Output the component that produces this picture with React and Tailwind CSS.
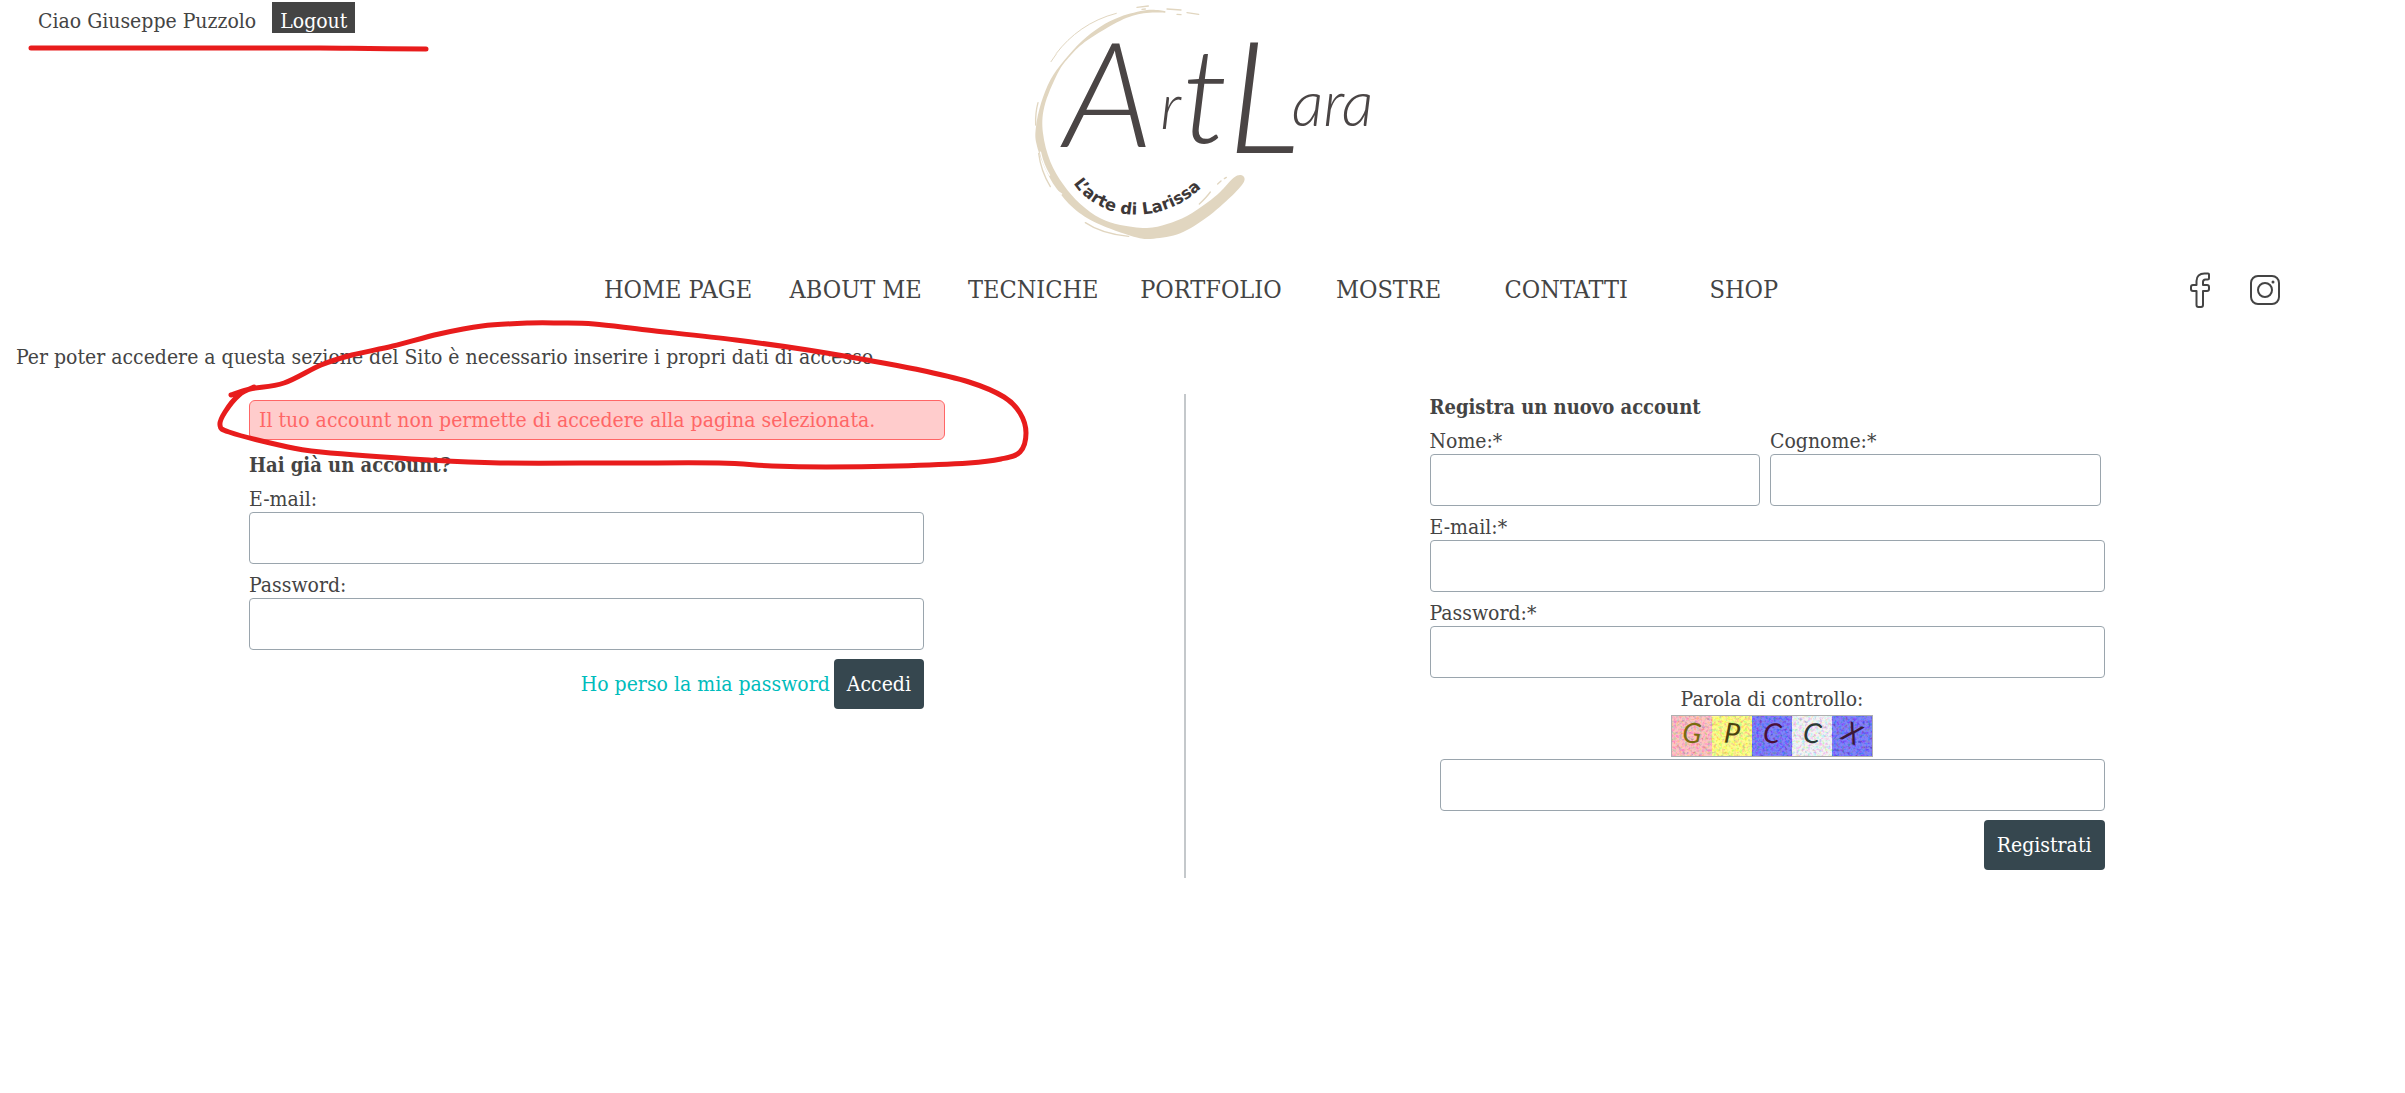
import React from "react";

const NAV = ["HOME PAGE", "ABOUT ME", "TECNICHE", "PORTFOLIO", "MOSTRE", "CONTATTI", "SHOP"];

const LOOP = [
  [231, 395], [250, 389], [284, 383], [321, 365], [352, 355], [393, 346], [439, 334], [482, 326],
  [529, 323], [560, 323], [594, 324], [647, 330], [736, 340], [808, 350], [861, 359], [915, 369],
  [969, 382], [1004, 397], [1020, 413], [1026, 433], [1020, 452], [1001, 459], [969, 463],
  [897, 466], [826, 467], [772, 466], [719, 463], [620, 463], [500, 463], [429, 460], [321, 452],
  [279, 445], [229, 432], [220, 425], [225, 412], [239, 395], [254, 387],
];

const RING = [
  [435, 33], [380, 30], [300, 50], [240, 80], [185, 123], [130, 183], [90, 240], [62, 310],
  [47, 380], [48, 430], [72, 500], [108, 565], [160, 625], [230, 670], [340, 710], [400, 716],
  [480, 700], [560, 652], [630, 592], [671, 545], [664, 526], [640, 533], [600, 575], [560, 608],
  [500, 648], [440, 672], [380, 684], [300, 675], [240, 655], [180, 612], [130, 555], [90, 485],
  [68, 400], [72, 320], [112, 220], [150, 167], [202, 120], [300, 62], [370, 40], [435, 38],
];

// Catmull-Rom spline through the points, written as cubic segments.
function smooth(points) {
  let d = `M${points[0][0]} ${points[0][1]}`;
  for (let i = 0; i < points.length - 1; i++) {
    const p0 = points[i - 1] || points[i];
    const p1 = points[i];
    const p2 = points[i + 1];
    const p3 = points[i + 2] || p2;
    d += ` C${p1[0] + (p2[0] - p0[0]) / 6} ${p1[1] + (p2[1] - p0[1]) / 6} ${p2[0] - (p3[0] - p1[0]) / 6} ${p2[1] - (p3[1] - p1[1]) / 6} ${p2[0]} ${p2[1]}`;
  }
  return d;
}

function Marker() {
  return (
    <svg aria-hidden="true" className="pointer-events-none absolute top-0 left-0 z-10" width="1100" height="500" fill="none" stroke="#e81c1c" strokeWidth="5" strokeLinecap="round" strokeLinejoin="round">
      <path d="M31 48 H320 C350 48 360 49 426 49" />
      <path d={smooth(LOOP)} />
    </svg>
  );
}

function Logo() {
  return (
    <svg role="img" aria-label="Art Lara, L'arte di Larissa" viewBox="-7 0 1110 750" className="h-[250px] w-[370px]">
      <path fill="#e1d6c0" d={smooth(RING)} />
      <g fill="none" stroke="#e1d6c0" strokeLinecap="round">
        <path strokeWidth="3" d="M108 160 C150 105 210 60 288 40" />
        <path strokeWidth="3" d="M92 185 L108 162" />
        <path strokeWidth="4" d="M350 22 L384 18 M365 28 L375 27 M440 27 L482 30 M470 43 L482 44 M500 38 L535 43" />
        <path strokeWidth="4" d="M195 668 C230 692 270 704 325 709" />
        <path strokeWidth="4" d="M537 612 C550 600 560 590 570 576 M592 552 L602 543 M612 536 L618 532" />
        <path strokeWidth="4" d="M53 308 C47 330 45 350 46 375 M55 460 C60 500 72 530 90 560" />
      </g>
      <path fill="none" stroke="#fff" strokeWidth="4" d="M60 455 C66 485 75 505 88 527 M85 540 C95 560 110 573 125 583" />
      <g fill="#4a4545" fontFamily="Lato, sans-serif" fontWeight="300" fontStyle="italic">
        <text x="130" y="440" fontSize="440">A</text>
        <text x="420" y="388" fontSize="190">r</text>
        <text x="486" y="430" fontSize="400">t</text>
        <text x="620" y="460" fontSize="470">L</text>
        <text x="814" y="378" fontSize="190">ara</text>
      </g>
      <path id="motto" fill="none" d="M158 548 C240 668 440 690 575 530" />
      <text fill="#3d3838" fontFamily="'DejaVu Sans', sans-serif" fontWeight="700" fontSize="49">
        <textPath href="#motto" startOffset="2">L’arte di Larissa</textPath>
      </text>
    </svg>
  );
}

function Facebook() {
  return (
    <svg viewBox="0 0 20 36" className="h-9 w-5" fill="none" stroke="#444" strokeWidth="2" strokeLinejoin="round">
      <path d="M18 1.500 H14.500 C9.500 1.500 6.500 4.500 6.500 9 V13 H3 C1.800 13 1 13.800 1 15 V17 C1 18.200 1.800 19 3 19 H6.500 V33 C6.500 34.200 7.300 35 8.500 35 H11 C12.200 35 13 34.200 13 33 V19 H17 C18.200 19 19 18.200 19 17 V15 C19 13.800 18.200 13 17 13 H13 V10 C13 8.500 13.800 7.500 15.500 7.500 H17.500 C18.500 7.500 19 7 19 6 V2.500 C19 2 18.700 1.500 18 1.500 Z" />
    </svg>
  );
}

function Instagram() {
  return (
    <svg viewBox="0 0 30 30" className="size-[30px]" fill="none" stroke="#444" strokeWidth="2">
      <rect x="1" y="1" width="28" height="28" rx="7" />
      <circle cx="15" cy="15" r="7" />
      <circle cx="23" cy="7" r="1.500" fill="#444" stroke="none" />
    </svg>
  );
}

const TILES = [
  { c: "G", bg: "#ffb0b0", ink: "#7a6a10", a: 4 },
  { c: "P", bg: "#fffc66", ink: "#4a4210", a: 4 },
  { c: "C", bg: "#5a5af8", ink: "#4a1038", a: 10 },
  { c: "C", bg: "#f0f0f0", ink: "#2c3a36", a: 10 },
  { c: "X", bg: "#5a5af8", ink: "#3c1838", a: 24 },
];

function Captcha() {
  return (
    <svg role="img" aria-label="Parola di controllo" viewBox="0 0 202 42" className="h-[42px] w-[202px] overflow-visible">
      <filter id="grain" x="0" y="0" width="100%" height="100%" colorInterpolationFilters="sRGB">
        <feTurbulence type="fractalNoise" baseFrequency="0.35" numOctaves="2" seed="4" />
        <feColorMatrix values="3 0 0 0 -0.6  0 3 0 0 -0.6  0 0 3 0 -0.500  0 0 0 0 0.250" />
      </filter>
      {TILES.map((t, i) => (
        <rect key={i} x={1 + i * 40} y="1" width="40" height="40" fill={t.bg} />
      ))}
      <rect x="1" y="1" width="200" height="40" filter="url(#grain)" />
      {TILES.map((t, i) => (
        <text key={i} x={21 + i * 40} y="28" textAnchor="middle" fontSize="28" fontStyle="italic" fontFamily="Lato, sans-serif" fill={t.ink} transform={`rotate(${t.a} ${21 + i * 40} 19)`}>
          {t.c}
        </text>
      ))}
      <rect x="0.500" y="0.500" width="201" height="41" fill="none" stroke="#b0b0b0" />
    </svg>
  );
}

const INPUT = "block h-[52px] w-full rounded border border-[#9aa5ad] bg-white px-3 outline-none";
const BUTTON = "h-[50px] cursor-pointer rounded bg-[#36474f] px-[13px] text-white";

function Field({ id, label, type = "text" }) {
  return (
    <div className="mt-2">
      <label htmlFor={id} className="block">{label}</label>
      <input id={id} name={id} type={type} className={INPUT} />
    </div>
  );
}

export default function App() {
  return (
    <div className="relative min-h-screen bg-white font-['DejaVu_Serif_Condensed','DejaVu_Serif',serif] text-[21px] leading-[26px] text-[#444]">
      <header>
        <div className="grid grid-cols-[1fr_auto_1fr]">
          <div className="flex items-start gap-4 pt-[2px] pl-[38px]">
            <span className="whitespace-nowrap pt-[6px]">Ciao Giuseppe Puzzolo</span>
            <button type="button" className="h-[31px] cursor-pointer bg-[#444] px-2 pt-[6px] text-white">Logout</button>
          </div>
          <Logo />
        </div>
        <div className="grid grid-cols-[24.5%_1fr_23.8%] items-center pt-[22px]">
          <nav className="col-start-2 grid grid-cols-7 text-center text-[25px] leading-9">
            {NAV.map((n) => (
              <a key={n} href="#" className="whitespace-nowrap">{n}</a>
            ))}
          </nav>
          <div className="flex items-center justify-end gap-10 pr-[125px]">
            <a href="#" aria-label="Facebook"><Facebook /></a>
            <a href="#" aria-label="Instagram"><Instagram /></a>
          </div>
        </div>
      </header>
      <main className="pt-9">
        <p className="pl-4">Per poter accedere a questa sezione del Sito è necessario inserire i propri dati di accesso.</p>
        <div className="mt-6 grid min-h-[484px] grid-cols-[49.3%_1fr]">
          <section className="border-r-2 border-[#c4c8cb] pt-[6px] pl-[21%]">
            <div role="alert" className="mb-3 flex min-h-10 max-w-[696px] items-center rounded-md border border-[#ff6666] bg-[#ffcccc] px-[9px] text-[#ff6666]">
              Il tuo account non permette di accedere alla pagina selezionata.
            </div>
            <form className="max-w-[675px]">
              <h2 className="text-xl leading-[26px] font-bold">Hai già un account?</h2>
              <Field id="login-email" label="E-mail:" type="email" />
              <Field id="login-password" label="Password:" type="password" />
              <div className="mt-[9px] flex items-center justify-end gap-1">
                <a href="#" className="text-[#00bcbc]">Ho perso la mia password</a>
                <button type="button" className={BUTTON}>Accedi</button>
              </div>
            </form>
          </section>
          <section className="pl-[20%]">
            <form className="max-w-[675px]">
              <h2 className="text-xl leading-[26px] font-bold">Registra un nuovo account</h2>
              <div className="grid grid-cols-2 gap-[10px] pr-1">
                <Field id="nome" label="Nome:*" />
                <Field id="cognome" label="Cognome:*" />
              </div>
              <Field id="email" label="E-mail:*" type="email" />
              <Field id="password" label="Password:*" type="password" />
              <div className="mt-2 flex flex-col items-center pl-[10px]">
                <label htmlFor="controllo" className="mb-[3px]">Parola di controllo:</label>
                <Captcha />
                <input id="controllo" name="controllo" type="text" className={INPUT + " mt-[2px]"} />
              </div>
              <div className="mt-[9px] flex justify-end">
                <button type="button" className={BUTTON}>Registrati</button>
              </div>
            </form>
          </section>
        </div>
      </main>
      <Marker />
    </div>
  );
}
